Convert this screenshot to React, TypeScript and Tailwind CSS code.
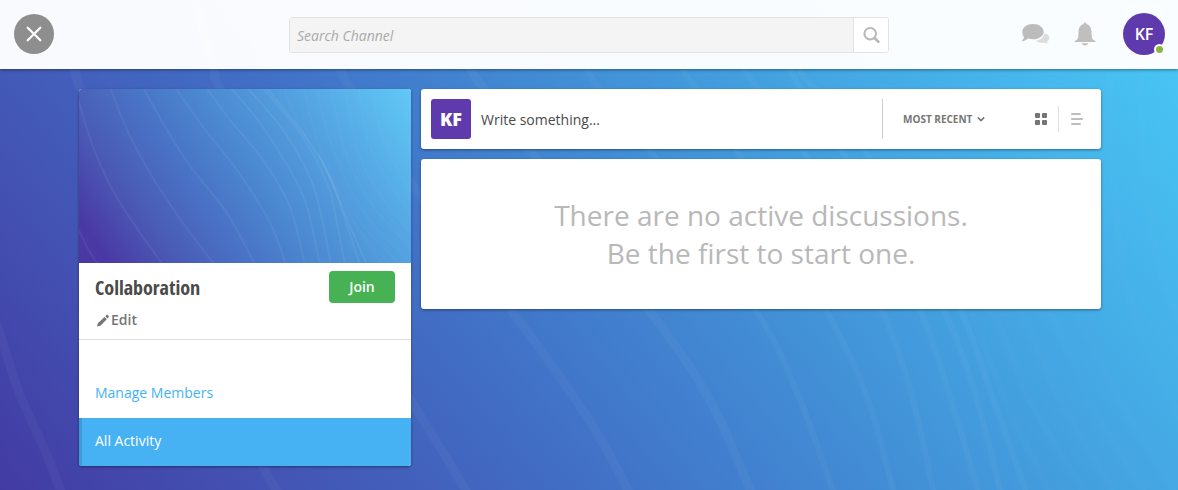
import React from "react";

type Point = [number, number];

/** Builds a smooth curve that runs through every point. */
function smooth(points: Point[]): string {
  let d = `M${points[0][0]} ${points[0][1]}`;
  for (let i = 0; i < points.length - 1; i++) {
    const p0 = points[Math.max(i - 1, 0)];
    const p1 = points[i];
    const p2 = points[i + 1];
    const p3 = points[Math.min(i + 2, points.length - 1)];
    d += ` C${p1[0] + (p2[0] - p0[0]) / 6} ${p1[1] + (p2[1] - p0[1]) / 6} ${p2[0] - (p3[0] - p1[0]) / 6} ${p2[1] - (p3[1] - p1[1]) / 6} ${p2[0]} ${p2[1]}`;
  }
  return d;
}

const PAGE_WAVES: Point[][] = [
  [[-12, 300], [2, 340], [20, 395], [44, 448], [62, 494]],
  [[58, 0], [75, 70], [83, 96], [150, 270], [262, 466], [280, 494]],
  [[195, 0], [214, 70], [222, 92], [300, 230], [415, 407], [468, 494]],
  [[310, 0], [340, 70], [353, 92], [416, 190], [511, 310], [589, 420], [630, 494]],
  [[430, 0], [471, 70], [485, 90], [533, 154], [649, 310], [690, 367], [720, 420], [752, 494]],
  [[540, 0], [587, 70], [600, 90], [653, 154], [756, 310], [799, 397], [834, 494]],
  [[640, 0], [683, 70], [697, 90], [739, 154], [826, 310], [867, 397], [894, 494]],
  [[700, 0], [745, 70], [759, 90], [805, 154], [882, 310], [912, 397], [934, 494]],
  [[750, 0], [790, 70], [802, 90], [844, 154], [920, 310], [955, 413], [979, 494]],
  [[760, 0], [799, 70], [816, 90], [867, 154], [944, 310], [976, 397], [1001, 494]],
  [[900, 180], [961, 310], [991, 393], [1027, 494]],
];

const PAGE_FAINT_WAVES: Point[][] = [
  [[930, 240], [970, 310], [1005, 400], [1050, 494]],
  [[940, 220], [992, 310], [1030, 400], [1085, 494]],
  [[960, 180], [1022, 310], [1060, 400], [1115, 494]],
  [[1000, 180], [1050, 310], [1090, 400], [1145, 494]],
  [[1040, 180], [1078, 310], [1120, 400], [1175, 494]],
  [[1110, 70], [1112, 160], [1130, 300], [1190, 440]],
  [[1140, 70], [1145, 170], [1160, 270], [1190, 340]],
];

const COVER_WAVES: Point[][] = [
  [[-2, 137], [8, 158], [19, 176]],
  [[-2, 5], [2, 20], [16, 63], [41, 114], [84, 176]],
  [[31, -2], [48, 41], [71, 84], [104, 134], [136, 176]],
  [[64, -2], [88, 41], [114, 81], [148, 124], [176, 176]],
  [[96, -2], [124, 38], [158, 81], [191, 134], [207, 176]],
  [[127, -2], [151, 31], [184, 71], [211, 118], [226, 176]],
  [[151, -2], [181, 34], [211, 81], [228, 118], [241, 176]],
  [[168, -2], [204, 41], [231, 88], [243, 130], [252, 176]],
  [[183, -2], [221, 44], [248, 94], [258, 134], [266, 176]],
  [[187, -2], [224, 44], [248, 81], [264, 124], [281, 176]],
  [[240, 66], [254, 96], [268, 130], [288, 176]],
];

const COVER_FAINT_WAVES: Point[][] = [
  [[244, 74], [268, 124], [304, 176]],
  [[205, 0], [222, 40], [258, 100], [280, 140], [312, 176]],
  [[225, 0], [240, 55], [275, 125], [322, 176]],
  [[238, 0], [254, 60], [286, 125], [332, 174]],
  [[252, 0], [267, 65], [296, 120], [334, 160]],
  [[266, 0], [280, 65], [304, 110], [334, 146]],
  [[280, 0], [292, 60], [334, 130]],
  [[294, 0], [304, 50], [334, 108]],
];

function PageBackdrop() {
  return (
    <svg
      aria-hidden="true"
      className="absolute inset-0 h-full w-full"
      viewBox="0 0 1178 490"
      preserveAspectRatio="xMidYMid slice"
      fill="none"
    >
      <defs>
        <linearGradient id="page-sky" gradientUnits="userSpaceOnUse" x1="0" y1="490" x2="924" y2="-256">
          <stop offset="0" stopColor="#423ba4" />
          <stop offset="0.22" stopColor="#4359b7" />
          <stop offset="0.39" stopColor="#4170c6" />
          <stop offset="0.61" stopColor="#4291d7" />
          <stop offset="0.78" stopColor="#44a9e4" />
          <stop offset="1" stopColor="#48c5f4" />
        </linearGradient>
      </defs>
      <rect width="1178" height="490" fill="url(#page-sky)" />
      <g stroke="#ffffff" strokeOpacity="0.035" strokeWidth="9">
        {PAGE_WAVES.slice(0, 5).map((w, i) => (
          <path key={i} d={smooth(w)} />
        ))}
      </g>
      <g stroke="#ffffff" strokeOpacity="0.035" strokeWidth="6">
        {PAGE_WAVES.slice(5).map((w, i) => (
          <path key={i} d={smooth(w)} />
        ))}
      </g>
      <g stroke="#ffffff" strokeOpacity="0.012" strokeWidth="8">
        {PAGE_FAINT_WAVES.map((w, i) => (
          <path key={i} d={smooth(w)} />
        ))}
      </g>
    </svg>
  );
}

function CoverArt() {
  return (
    <svg
      role="img"
      aria-label="Collaboration"
      className="block h-[174px] w-full"
      viewBox="0 0 332 174"
      preserveAspectRatio="xMidYMid slice"
      fill="none"
    >
      <defs>
        <linearGradient id="cover-sky" gradientUnits="userSpaceOnUse" x1="0" y1="174" x2="304" y2="-37">
          <stop offset="0" stopColor="#4b37a1" />
          <stop offset="0.07" stopColor="#4a39a5" />
          <stop offset="0.22" stopColor="#4a5bb5" />
          <stop offset="0.38" stopColor="#4973c6" />
          <stop offset="0.52" stopColor="#4b87cf" />
          <stop offset="0.73" stopColor="#53a1e0" />
          <stop offset="1" stopColor="#60c8f6" />
        </linearGradient>
      </defs>
      <rect width="332" height="174" fill="url(#cover-sky)" />
      <g stroke="#ffffff" strokeOpacity="0.06" strokeWidth="2">
        {COVER_WAVES.map((w, i) => (
          <path key={i} d={smooth(w)} />
        ))}
      </g>
      <g stroke="#ffffff" strokeOpacity="0.025" strokeWidth="2">
        {COVER_FAINT_WAVES.map((w, i) => (
          <path key={i} d={smooth(w)} />
        ))}
      </g>
    </svg>
  );
}

function Header() {
  return (
    <header className="relative grid h-[69px] grid-cols-[1fr_minmax(0,600px)_1fr] items-center bg-white/97 shadow-[0_1px_3px_rgba(0,0,0,0.4)]">
      <div className="pb-px pl-3.5">
        <button
          type="button"
          aria-label="Close"
          className="flex size-10 items-center justify-center rounded-full bg-[#8e8e8e]"
        >
          <svg className="size-4" viewBox="0 0 16 16" fill="none" stroke="#fff" strokeWidth="2.2" strokeLinecap="round">
            <path d="M1.700 1.700 14.300 14.300M14.300 1.700 1.700 14.300" />
          </svg>
        </button>
      </div>

      <form role="search" className="flex h-9 overflow-hidden rounded-[3px] border border-[#e3e3e3]" onSubmit={(e) => e.preventDefault()}>
        <input
          type="text"
          aria-label="Search Channel"
          placeholder="Search Channel"
          className="min-w-0 flex-1 bg-[#f4f4f4] px-[7px] pt-0.5 text-sm text-[#4a4a4a] italic outline-none placeholder:text-[#aaaaaa]"
        />
        <button
          type="submit"
          aria-label="Search"
          className="flex w-[35px] items-center justify-center border-l border-[#e3e3e3] bg-white"
        >
          <svg className="size-[17px]" viewBox="0 0 17 17" fill="none" stroke="#b8b8b8" strokeLinecap="round">
            <circle cx="7.200" cy="7.700" r="5.800" strokeWidth="2" />
            <path d="M11.800 12.200 15.400 15.700" strokeWidth="2.600" />
          </svg>
        </button>
      </form>

      <div className="flex items-center justify-end pr-[13px] pb-px">
        <button type="button" aria-label="Messages" className="mr-6">
          <svg className="block h-[22px] w-[30px]" viewBox="0 0 30 22">
            <path
              d="M24.300 10.200c3 .6 5 2.300 5 4.700 0 1.500-.9 2.700-2.200 3.600.1.900.6 1.600 1.300 2.300-1.600 0-2.800-.4-3.800-1.200-3.600.7-7-.2-8.600-2.100 4.600-.6 8-3.300 8.300-7.300z"
              fill="#dcdcdc"
            />
            <path
              d="M13 1c6 0 10.700 3.500 10.700 7.700S19 16.300 13 16.300c-1.800 0-3.400-.3-4.900-.8-1.700 1.700-4 2.500-7 2.800 1.500-1.100 2.500-2.300 2.900-4.100-1.100-1.500-1.700-3.400-1.700-5.500C2.300 4.500 7 1 13 1z"
              fill="#bcbcbc"
              stroke="#fbfdff"
              strokeWidth="1.200"
              paintOrder="stroke"
            />
          </svg>
        </button>
        <button type="button" aria-label="Notifications" className="mr-[27px]">
          <svg className="block h-6 w-[22px]" viewBox="0 0 22 24" fill="#bfbfbf">
            <path d="M11 .5c.9 0 1.400.6 1.500 1.500 3 .9 4.700 3.300 4.900 6.800l.3 5.500c.2 2.500 1.300 3.800 3.800 4.700v1H.5v-1c2.500-.9 3.600-2.200 3.800-4.700l.3-5.500C4.800 5.300 6.500 2.900 9.500 2 9.600 1.100 10.100.5 11 .5z" />
            <path d="M7.600 21.200h6.800c-.5 1.400-1.800 2.200-3.400 2.200s-2.900-.8-3.400-2.200z" />
          </svg>
        </button>
        <button
          type="button"
          aria-label="Account"
          className="relative flex size-[42px] items-center justify-center rounded-full bg-[#5f3aad] text-base font-semibold text-white"
        >
          KF
          <span className="absolute right-0 bottom-0 size-[11px] rounded-full border-2 border-white bg-[#8ab53e]" />
        </button>
      </div>
    </header>
  );
}

function Sidebar() {
  return (
    <aside className="w-[332px] shrink-0 overflow-hidden rounded-[3px] bg-white shadow-[0_1px_3px_rgba(0,0,0,0.4)]">
      <CoverArt />
      <div className="border-b border-[#dedede] px-4 pt-2 pb-2">
        <div className="flex h-8 items-center justify-between">
          <h1 className="pt-0.5 font-['Open_Sans_Condensed','Noto_Sans_Condensed','Roboto_Condensed','Open_Sans',sans-serif] text-xl font-bold text-[#4a4a4a]">
            Collaboration
          </h1>
          <button type="button" className="h-8 w-[66px] rounded-[4px] bg-[#46b254] text-sm font-semibold text-white">
            Join
          </button>
        </div>
        <a href="#edit" className="mt-1.5 flex h-[22px] items-center gap-px text-sm font-semibold text-[#757575]">
          <svg className="size-[15px]" viewBox="0 0 15 15" fill="#757575">
            <path d="M2 13.600l.9-3.400 6.600-6.200 2.300 2.300-6.400 6.500zM10.300 3.200l1.200-1.100c.4-.4.900-.4 1.300 0l.8.800c.4.400.4.900 0 1.300l-1.100 1.200z" />
          </svg>
          Edit
        </a>
      </div>
      <nav className="flex flex-col pt-[30px] text-sm">
        <a href="#members" className="flex h-12 items-center px-4 pb-0.5 text-[#46b2f4]">
          Manage Members
        </a>
        <a
          href="#activity"
          aria-current="page"
          className="flex h-12 items-center border-l-3 border-[#3c9ad6] bg-[#46b2f4] pr-4 pb-0.5 pl-[13px] text-white"
        >
          All Activity
        </a>
      </nav>
    </aside>
  );
}

function Composer() {
  return (
    <section className="flex h-[60px] items-center rounded-[3px] bg-white pl-2.5 shadow-[0_1px_3px_rgba(0,0,0,0.4)]">
      <span className="flex size-10 items-center justify-center rounded-[3px] bg-[#5f3aad] text-lg font-extrabold text-white">
        KF
      </span>
      <button type="button" className="h-10 flex-1 pt-0.5 pl-2.5 text-left text-sm text-[#4a4a4a]">
        Write something...
      </button>
      <div className="flex h-10 items-center border-l border-[#cccccc] pl-5">
        <label className="relative flex items-center">
          <select
            aria-label="Sort discussions"
            className="w-[82px] appearance-none text-[10px] leading-4 font-bold text-[#757575] outline-none"
          >
            <option>MOST RECENT</option>
            <option>MOST POPULAR</option>
          </select>
          <svg
            aria-hidden="true"
            className="pointer-events-none absolute right-0 h-2 w-2"
            viewBox="0 0 8 8"
            fill="none"
            stroke="#757575"
            strokeWidth="1.5"
          >
            <path d="M.8 2.400 4 5.600 7.200 2.400" />
          </svg>
        </label>
      </div>
      <div className="flex items-center pr-[18px] pl-[50px]">
        <button type="button" aria-label="Grid view" aria-pressed="true" className="pr-[11px]">
          <svg className="block size-3" viewBox="0 0 12 12" fill="#757575">
            <rect width="5" height="5" rx="1" />
            <rect x="7" width="5" height="5" rx="1" />
            <rect y="7" width="5" height="5" rx="1" />
            <rect x="7" y="7" width="5" height="5" rx="1" />
          </svg>
        </button>
        <button
          type="button"
          aria-label="List view"
          aria-pressed="false"
          className="flex h-[26px] items-center border-l border-[#e0e0e0] pl-3"
        >
          <svg className="block size-3" viewBox="0 0 12 12" stroke="#bdbdbd" strokeWidth="2" strokeLinecap="round">
            <path d="M1 1h8M1 6h10M1 11h8" />
          </svg>
        </button>
      </div>
    </section>
  );
}

export default function App() {
  return (
    <div className="relative min-h-screen overflow-hidden font-['Open_Sans','Noto_Sans',sans-serif]">
      <PageBackdrop />
      <Header />
      <div className="relative flex items-start gap-2.5 pt-5 pr-[77px] pb-6 pl-[79px]">
        <Sidebar />
        <main className="flex min-w-0 flex-1 flex-col gap-2.5">
          <Composer />
          <section className="rounded-[3px] bg-white px-6 py-[37px] text-center text-[28px] leading-[38px] text-[#b8b8b8] shadow-[0_1px_3px_rgba(0,0,0,0.4)]">
            <p>There are no active discussions.</p>
            <p>Be the first to start one.</p>
          </section>
        </main>
      </div>
    </div>
  );
}
